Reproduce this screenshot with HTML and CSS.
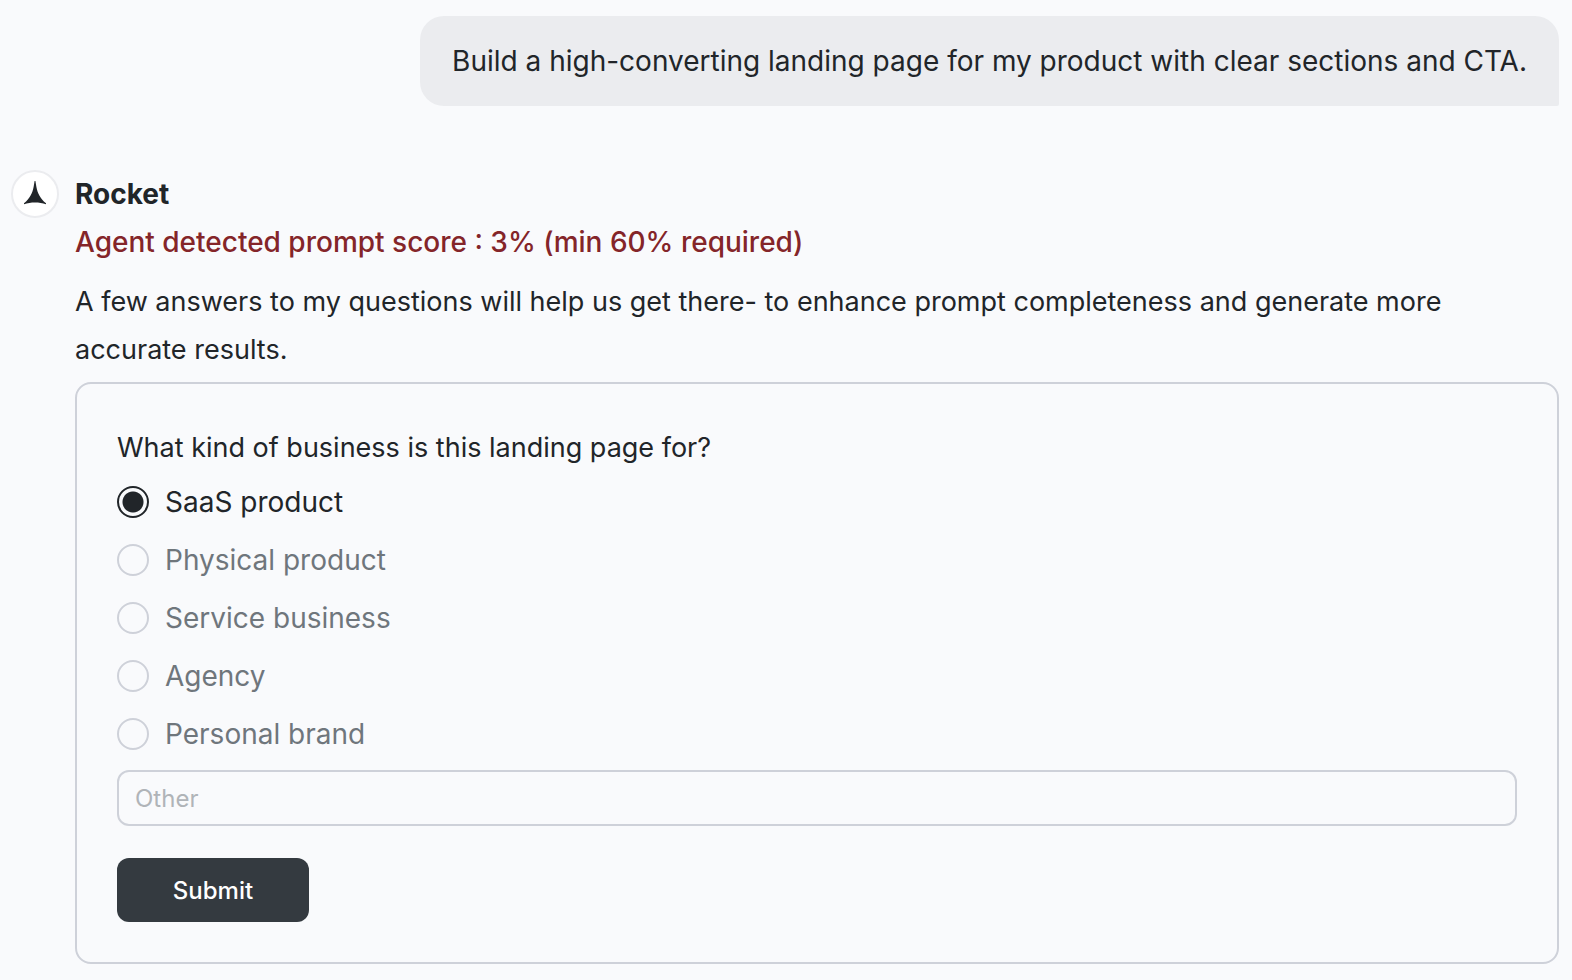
FILE: index.html
```html
<!DOCTYPE html>
<html lang="en">

<head>
    <meta charset="utf-8">
    <title>Rocket</title>
    <meta name="viewport" content="width=device-width, initial-scale=1">
    <link rel="stylesheet" href="styles.css">
</head>

<body>
    <main class="chat">
        <div class="user-message">Build a high-converting landing page for my product with clear sections and CTA.</div>

        <section class="reply">
            <div class="avatar">
                <svg width="24" height="26" viewBox="0 0 24 26" aria-hidden="true">
                    <path d="M11.600 0 H12.400 L13.400 6 C14.600 12 17 17.500 23 22.200 V23.200 C19.500 22 16 21.500 12 21.500 C8 21.500 4.500 22 1 23.200 V22.200 C7 17.500 9.400 12 10.600 6 Z" fill="#212529" />
                </svg>
            </div>
            <div class="reply-body">
                <h1 class="name">Rocket</h1>
                <p class="score">Agent detected prompt score : 3% (min 60% required)</p>
                <p class="intro">A few answers to my questions will help us get there- to enhance prompt completeness and generate more accurate results.</p>

                <form class="card">
                    <fieldset class="question">
                        <legend>What kind of business is this landing page for?</legend>
                        <label class="option"><input type="radio" name="business" checked><span>SaaS product</span></label>
                        <label class="option"><input type="radio" name="business"><span>Physical product</span></label>
                        <label class="option"><input type="radio" name="business"><span>Service business</span></label>
                        <label class="option"><input type="radio" name="business"><span>Agency</span></label>
                        <label class="option"><input type="radio" name="business"><span>Personal brand</span></label>
                    </fieldset>
                    <input class="other" type="text" placeholder="Other" aria-label="Other">
                    <button class="submit" type="submit">Submit</button>
                </form>
            </div>
        </section>
    </main>
</body>

</html>
```

FILE: styles.css
```css
* {
    box-sizing: border-box;
}

body {
    margin: 0;
    background-color: #f9fafc;
    color: #212529;
    font-family: Inter, sans-serif;
    font-size: 28px;
    line-height: 48px;
}

.chat {
    display: flex;
    flex-direction: column;
    gap: 64px;
    padding: 16px 13px 16px 11px;
}

.user-message {
    align-self: flex-end;
    padding: 21px 32px;
    background-color: #ebecef;
    border-radius: 24px 24px 2px 24px;
}

.reply {
    display: flex;
    gap: 16px;
}

.avatar {
    display: flex;
    flex: none;
    align-items: center;
    justify-content: center;
    width: 48px;
    height: 48px;
    background-color: #fff;
    border: 2px solid #ebecef;
    border-radius: 50%;
}

.reply-body {
    flex: 1;
}

.name,
.score,
.intro {
    margin: 0;
}

.name {
    font-size: 28px;
    font-weight: 700;
}

.score {
    margin-bottom: 12px;
    color: #842529;
    font-weight: 500;
}

.intro,
.question legend {
    font-size: 27px;
}

.card {
    padding: 40px;
    margin-top: 8px;
    border: 2px solid #ced1d9;
    border-radius: 16px;
}

.question {
    display: flex;
    flex-direction: column;
    gap: 10px;
    min-width: 0;
    padding: 0;
    margin: 0 0 12px;
    border: 0;
}

.question legend {
    padding: 0 0 6px;
}

.option {
    display: flex;
    align-items: center;
    gap: 16px;
    color: #6f767c;
}

.option:has(input:checked) {
    color: #212529;
}

.option input {
    width: 32px;
    height: 32px;
    margin: 0;
    appearance: none;
    border: 2px solid #ced1d9;
    border-radius: 50%;
}

.option input:checked {
    background: radial-gradient(circle, #212529 10px, transparent 11px);
    border-color: #212529;
}

.other {
    display: block;
    width: 100%;
    height: 56px;
    padding: 0 16px;
    background-color: transparent;
    border: 2px solid #ced1d9;
    border-radius: 12px;
    font: inherit;
    font-size: 24px;
}

.other::placeholder {
    color: #b0b4b8;
}

.submit {
    display: block;
    width: 192px;
    height: 64px;
    margin-top: 32px;
    background-color: #343a40;
    border: 0;
    border-radius: 12px;
    color: #fff;
    font-family: inherit;
    font-size: 24px;
    font-weight: 500;
    cursor: pointer;
}
```
